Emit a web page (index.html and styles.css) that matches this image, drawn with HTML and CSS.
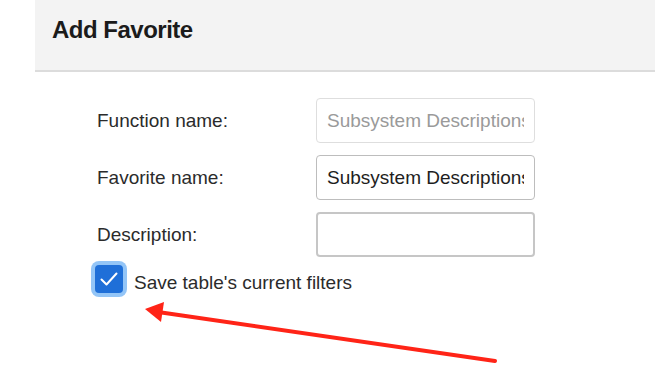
FILE: index.html
```html
<!DOCTYPE html>
<html lang="en">
<head>
    <meta charset="UTF-8">
    <meta name="viewport" content="width=device-width, initial-scale=1.0">
    <title>Add Favorite</title>
    <link rel="stylesheet" href="styles.css">
</head>
<body>
    <div class="dialog">
        <div class="dialog-header">
            <h1 class="dialog-title">Add Favorite</h1>
        </div>
        <form class="fav-form">
            <label class="field-label" for="functionName">Function name:</label>
            <input class="field-input field-input--disabled" id="functionName" type="text" value="Subsystem Descriptions" readonly>

            <label class="field-label" for="favoriteName">Favorite name:</label>
            <input class="field-input" id="favoriteName" type="text" value="Subsystem Descriptions">

            <label class="field-label" for="description">Description:</label>
            <input class="field-input field-input--thick" id="description" type="text">

            <label class="check-row">
                <span class="check-box">
                    <svg viewBox="0 0 28 28" width="28" height="28">
                        <polyline points="6.5,14.5 11.5,19.5 21.5,8.5" fill="none" stroke="#fff" stroke-width="2" stroke-linecap="round" stroke-linejoin="round"></polyline>
                    </svg>
                </span>
                <span class="check-text">Save table's current filters</span>
            </label>
        </form>
    </div>

    <svg class="annotation" viewBox="0 0 655 386" width="655" height="386">
        <line x1="495" y1="361" x2="158" y2="312" stroke="#ff2417" stroke-width="4" stroke-linecap="round"></line>
        <polygon points="145,309 164,302 161,322" fill="#ff2417"></polygon>
    </svg>
</body>
</html>
```

FILE: styles.css
```css
* {
  margin: 0;
  padding: 0;
  box-sizing: border-box;
}

body {
  font-family: 'Liberation Sans', Arial, sans-serif;
  background-color: #fff;
  color: #222;
  width: 655px;
  height: 386px;
  overflow: hidden;
  position: relative;
}

.dialog-header {
  margin-left: 35px;
  height: 72px;
  background-color: #f3f3f3;
  border-bottom: 2px solid #dcdcdc;
  padding: 16px 0 0 17px;
}

.dialog-title {
  font-size: 24px;
  font-weight: bold;
  letter-spacing: -0.5px;
  color: #1b1b1b;
  line-height: 28px;
}

.fav-form {
  display: grid;
  grid-template-columns: 219px 219px;
  grid-auto-rows: 45px;
  row-gap: 12px;
  align-items: center;
  padding: 26px 0 0 97px;
}

.field-label {
  font-size: 19px;
  color: #2b2b2b;
}

.field-input {
  width: 219px;
  height: 45px;
  border: 1.5px solid #bdbdbd;
  border-radius: 4px;
  padding: 0 10px;
  font-family: 'Liberation Sans', Arial, sans-serif;
  font-size: 19px;
  color: #1e1e1e;
  background-color: #fff;
  outline: none;
}

.field-input--disabled {
  border-color: #dedede;
  color: #9a9a9a;
}

.field-input--thick {
  border: 2px solid #c6c6c6;
}

.check-row {
  grid-column: 1 / 3;
  align-self: start;
  display: flex;
  align-items: center;
  gap: 11px;
  margin-left: -2px;
  margin-top: -5px;
  height: 30px;
}

.check-box {
  width: 28px;
  height: 28px;
  border-radius: 4px;
  background-color: #1f6fd8;
  box-shadow: 0 0 0 4px #93c5f7;
  display: flex;
}

.check-text {
  font-size: 19px;
  color: #2b2b2b;
  padding-top: 7px;
}

.annotation {
  position: absolute;
  top: 0;
  left: 0;
  pointer-events: none;
}
```
